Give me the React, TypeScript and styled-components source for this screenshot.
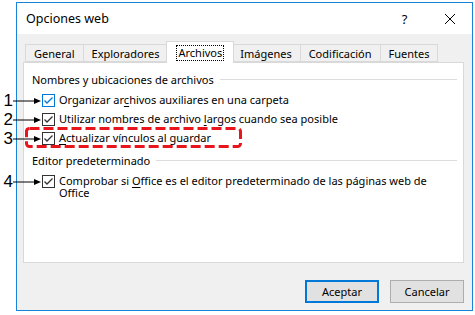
import React from "react"
import styled, { createGlobalStyle } from "styled-components"

const Global = createGlobalStyle`
    html, body {
        margin: 0;
        padding: 0;
        background: #fff;
    }
    body {
        font-family: "Noto Sans", "Open Sans", sans-serif;
        font-size: 11px;
        color: #000;
    }
`

const Page = styled.div`
    position: relative;
    width: 475px;
    height: 315px;
    padding: 2px 0 0 16px;
    box-sizing: border-box;
`

const Win = styled.div`
    width: 457px;
    height: 309px;
    box-sizing: border-box;
    border: 1px solid #1883d7;
    display: flex;
    flex-direction: column;
    background: #f0f0f0;
`

const TitleBar = styled.div`
    height: 31px;
    background: #fff;
    display: flex;
    align-items: center;
    padding: 0 0 0 9px;
    font-size: 12.5px;
`

const Title = styled.div`
    flex: 1;
`

const TitleBtn = styled.div`
    width: 45px;
    display: flex;
    justify-content: center;
    align-items: center;
    font-size: 13px;
`

const Body = styled.div`
    flex: 1;
    display: flex;
    flex-direction: column;
    padding: 7px 8px 7px 6px;
`

const Tabs = styled.div`
    display: flex;
    align-items: flex-end;
    height: 21px;
    padding-left: 2px;
    position: relative;
    z-index: 1;
`

const Tab = styled.div<{ $active?: boolean }>`
    height: ${p => (p.$active ? "22px" : "18px")};
    margin: ${p => (p.$active ? "0 -2px -1px" : "0")};
    padding: 0 ${p => (p.$active ? "10px" : "8px")};
    box-sizing: border-box;
    border: 1px solid #d9d9d9;
    border-bottom: ${p => (p.$active ? "none" : "1px solid #d9d9d9")};
    border-left: ${p => (p.$active ? "1px solid #d9d9d9" : "none")};
    background: ${p => (p.$active ? "#fff" : "#f0f0f0")};
    display: flex;
    align-items: center;
    position: relative;
    z-index: ${p => (p.$active ? 2 : 0)};
    &:first-child {
        border-left: 1px solid #d9d9d9;
    }
`

const Focus = styled.span`
    outline: 1px dotted #000;
    outline-offset: 0;
    padding: 0 1px;
    line-height: 14px;
`

const Panel = styled.div`
    height: 201px;
    background: #fff;
    border: 1px solid #d9d9d9;
    box-sizing: border-box;
    padding: 9px 6px 0 8px;
    display: flex;
    flex-direction: column;
`

const GroupHead = styled.div`
    display: flex;
    align-items: center;
    gap: 6px;
    height: 14px;
    &::after {
        content: "";
        flex: 1;
        height: 1px;
        background: #dcdcdc;
    }
`

const Rows = styled.div`
    display: flex;
    flex-direction: column;
    gap: 5px;
    padding: 7px 0 8px 10px;
`

const Row = styled.div`
    position: relative;
    display: flex;
    align-items: flex-start;
    gap: 4px;
    line-height: 14px;
`

const Box = styled.div<{ $hot?: boolean }>`
    width: 13px;
    height: 13px;
    flex: none;
    box-sizing: border-box;
    border: 1px solid ${p => (p.$hot ? "#0078d7" : "#333")};
    background: #fff;
    display: flex;
    align-items: center;
    justify-content: center;
    margin-top: 1px;
    svg {
        display: block;
    }
`

const Label = styled.div`
    white-space: nowrap;
`

const WrapLabel = styled.div`
    width: 372px;
    line-height: 12px;
    padding-top: 1px;
`

const Callout = styled.div`
    position: absolute;
    right: calc(100% + 1px);
    top: 0;
    width: 38px;
    height: 15px;
    display: flex;
    align-items: center;
    justify-content: flex-end;
    font-family: "Liberation Sans", Arial, sans-serif;
    font-size: 17px;
    svg {
        display: block;
    }
`

const DashBox = styled.svg`
    position: absolute;
    left: -17px;
    top: -4px;
    overflow: visible;
`

const Footer = styled.div`
    flex: 1;
    display: flex;
    justify-content: flex-end;
    align-items: flex-end;
    gap: 11px;
`

const Btn = styled.button<{ $primary?: boolean }>`
    width: 74px;
    height: 23px;
    box-sizing: border-box;
    font: inherit;
    background: #e1e1e1;
    border: ${p => (p.$primary ? "2px solid #0078d7" : "1px solid #adadad")};
    padding: 0;
    color: #000;
`

const Check = ({ hot }: { hot?: boolean }) => (
    <Box $hot={hot}>
        <svg width="11" height="11" viewBox="0 0 11 11">
            <polyline
                points="1.5,5.5 4,8 9.5,2.5"
                fill="none"
                stroke={hot ? "#0078d7" : "#333"}
                strokeWidth="1.3"
            />
        </svg>
    </Box>
)

const Arrow = ({ n }: { n: string }) => (
    <Callout>
        <span>{n}</span>
        <svg width="28" height="8" viewBox="0 0 28 8">
            <line x1="0" y1="4" x2="22" y2="4" stroke="#000" strokeWidth="1" />
            <polygon points="21,1 28,4 21,7" fill="#000" />
        </svg>
    </Callout>
)

const U = styled.u`
    text-decoration-thickness: 1px;
    text-underline-offset: 2px;
`

const tabs = ["General", "Exploradores", "Archivos", "Imágenes", "Codificación", "Fuentes"]

export default function App() {
    return (
        <Page>
            <Global />
            <Win>
                <TitleBar>
                    <Title>Opciones web</Title>
                    <TitleBtn>?</TitleBtn>
                    <TitleBtn>
                        <svg width="12" height="12" viewBox="0 0 12 12">
                            <path d="M1 1 L11 11 M11 1 L1 11" stroke="#000" strokeWidth="1" />
                        </svg>
                    </TitleBtn>
                </TitleBar>
                <Body>
                    <Tabs>
                        {tabs.map(t => (
                            <Tab key={t} $active={t === "Archivos"}>
                                {t === "Archivos" ? <Focus>{t}</Focus> : t}
                            </Tab>
                        ))}
                    </Tabs>
                    <Panel>
                        <GroupHead>Nombres y ubicaciones de archivos</GroupHead>
                        <Rows>
                            <Row>
                                <Arrow n="1" />
                                <Check hot />
                                <Label>
                                    Organizar ar<U>c</U>hivos auxiliares en una carpeta
                                </Label>
                            </Row>
                            <Row>
                                <Arrow n="2" />
                                <Check />
                                <Label>
                                    Utilizar nombres de archivo <U>l</U>argos cuando sea posible
                                </Label>
                            </Row>
                            <Row>
                                <Arrow n="3" />
                                <DashBox width="217" height="21">
                                    <rect
                                        x="1.5"
                                        y="1.5"
                                        width="214"
                                        height="18"
                                        rx="3"
                                        fill="none"
                                        stroke="#e8161c"
                                        strokeWidth="3"
                                        strokeDasharray="10 4"
                                    />
                                </DashBox>
                                <Check />
                                <Label>
                                    <U>A</U>ctualizar vínculos al guardar
                                </Label>
                            </Row>
                        </Rows>
                        <GroupHead>Editor predeterminado</GroupHead>
                        <Rows>
                            <Row>
                                <Arrow n="4" />
                                <Check />
                                <WrapLabel>
                                    Comprobar si <U>O</U>ffice es el editor predeterminado de las páginas web de Office
                                </WrapLabel>
                            </Row>
                        </Rows>
                    </Panel>
                    <Footer>
                        <Btn $primary>Aceptar</Btn>
                        <Btn>Cancelar</Btn>
                    </Footer>
                </Body>
            </Win>
        </Page>
    )
}
